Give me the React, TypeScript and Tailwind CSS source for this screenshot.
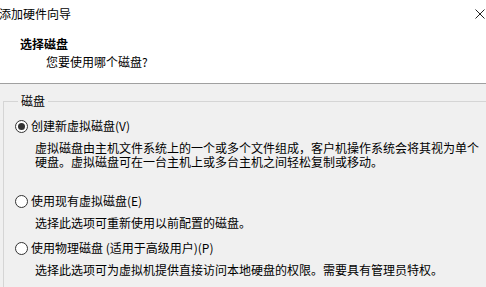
import React from "react";

function Radio({ checked }: { checked?: boolean }) {
  return (
    <span className="flex h-[13px] w-[13px] shrink-0 items-center justify-center rounded-full border border-[#333] bg-white">
      {checked && <span className="h-[7px] w-[7px] rounded-full bg-[#333]" />}
    </span>
  );
}

function Option({
  checked,
  label,
  lines,
  className,
}: {
  checked?: boolean;
  label: string;
  lines: string[];
  className?: string;
}) {
  return (
    <div className={"flex flex-col " + (className ?? "")}>
      <label className="flex h-[16px] items-center gap-[3px]">
        <Radio checked={checked} />
        <span>{label}</span>
      </label>
      <div className="mt-[7px] pl-[20px] leading-[14px]">
        {lines.map((l) => (
          <div key={l}>{l}</div>
        ))}
      </div>
    </div>
  );
}

export default function App() {
  return (
    <div
      className="h-[287px] w-[486px] overflow-hidden bg-[#f0f0f0] text-[12px] text-black"
      style={{ fontFamily: '"Noto Sans CJK SC", "Noto Sans", sans-serif' }}
    >
      <div className="h-[84px] border-b border-[#a0a0a0] bg-white">
        <div className="flex h-[28px] items-center justify-between pl-0 pr-[1px]">
          <span className="-ml-[1px]">添加硬件向导</span>
          <svg width="10" height="10" viewBox="0 0 10 10">
            <path d="M0.5 0.5 L9.5 9.5 M9.5 0.5 L0.5 9.5" stroke="#222" strokeWidth="1" />
          </svg>
        </div>
        <div className="pl-[20px] pt-[8px] font-bold leading-[16px]">选择磁盘</div>
        <div className="pl-[46px] pt-[2px] leading-[16px]">您要使用哪个磁盘?</div>
      </div>
      <fieldset className="ml-[3px] mt-[10px] -mr-[10px] border border-[#d5d5d5] pb-[20px] pl-[11px] pt-[10px]">
        <legend className="ml-[3px] px-[3px] leading-[14px]">磁盘</legend>
        <Option
          checked
          label="创建新虚拟磁盘(V)"
          lines={[
            "虚拟磁盘由主机文件系统上的一个或多个文件组成，客户机操作系统会将其视为单个",
            "硬盘。虚拟磁盘可在一台主机上或多台主机之间轻松复制或移动。",
          ]}
        />
        <Option
          className="mt-[24px]"
          label="使用现有虚拟磁盘(E)"
          lines={["选择此选项可重新使用以前配置的磁盘。"]}
        />
        <Option
          className="mt-[10px]"
          label="使用物理磁盘 (适用于高级用户)(P)"
          lines={["选择此选项可为虚拟机提供直接访问本地硬盘的权限。需要具有管理员特权。"]}
        />
      </fieldset>
    </div>
  );
}
